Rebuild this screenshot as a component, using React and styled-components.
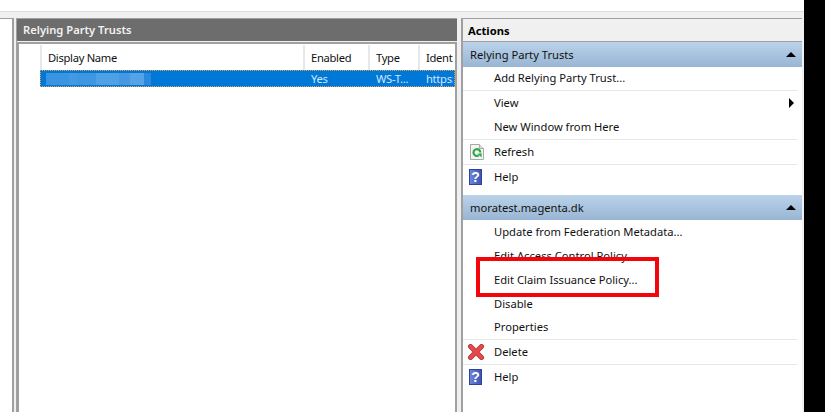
import React from 'react'
import styled, { createGlobalStyle } from 'styled-components'

const GlobalStyle = createGlobalStyle`
    html, body {
        margin: 0;
        padding: 0;
        background: #000;
    }
    body {
        font-family: "Noto Sans", "Open Sans", sans-serif;
        font-size: 11.2px;
        color: #000;
        overflow: hidden;
    }
`

const Page = styled.div`
    display: flex;
    width: 825px;
    height: 412px;
    overflow: hidden;
`

const Window = styled.div`
    width: 804px;
    display: flex;
    flex-direction: column;
    background: #f0f0f0;
`

const TopStrip = styled.div`
    height: 11px;
    background: #fff;
    border-bottom: 1px solid #dcdcdc;
`

const Panes = styled.div`
    flex: 1;
    display: flex;
    margin-top: 6px;
    min-height: 0;
`

const TreePane = styled.div`
    width: 12px;
    background: #fff;
    border-top: 1px solid #a0a0a0;
    border-right: 2px solid #a0a0a0;
    margin-right: 2px;
`

const CenterPane = styled.section`
    width: 440px;
    display: flex;
    flex-direction: column;
    border-top: 1px solid #a0a0a0;
    border-left: 1px solid #a0a0a0;
    margin-right: 4px;
`

const CenterTitle = styled.h2`
    margin: 0;
    height: 22px;
    line-height: 21px;
    padding-left: 6px;
    background: #6d6d6d;
    color: #f2f2f2;
    font-size: 11.2px;
    font-weight: 600;
`

const TableFrame = styled.div`
    flex: 1;
    margin-top: 1px;
    background: #fff;
    border-top: 2px solid #a0a0a0;
    border-left: 2px solid #a0a0a0;
    border-right: 2px solid #a0a0a0;
    padding-top: 1px;
    overflow: hidden;
`

const TableRow = styled.div`
    display: grid;
    grid-template-columns: 263px 65px 50px 35px;
    margin-left: 21px;
    letter-spacing: -0.3px;
    height: ${props => props.$height}px;
    line-height: ${props => props.$height + 1}px;
`

const HeadCell = styled.div`
    padding-left: 6px;
    border-left: 2px solid #e8e8e8;
    overflow: hidden;
    white-space: nowrap;
    color: #111;
`

const SelectedRow = styled(TableRow)`
    background: #0078d7;
    color: #d3e6f7;
    outline: 1px dotted #e0a050;
    outline-offset: -1px;
`

const RowCell = styled.div`
    padding-left: 8px;
    overflow: hidden;
    white-space: nowrap;
`

const BlurredName = styled.div`
    margin: 3px 0 2px 6px;
    width: 105px;
    height: 12px;
    background: linear-gradient(90deg,
        #3a94e2 0 22%, #4599e3 22% 30%, #3f97e2 30% 48%, #4fa0e4 48% 70%, #4599e3 70% 80%, #55a3e6 80% 93%, #2a89dd 93% 100%);
`

const ActionsPane = styled.aside`
    width: 339px;
    display: flex;
    flex-direction: column;
    background: #fff;
    border-top: 1px solid #a0a0a0;
    border-left: 2px solid #a0a0a0;
`

const ActionsTitle = styled.h2`
    margin: 0;
    height: 22px;
    line-height: 23px;
    padding-left: 5px;
    background: #f0f0f0;
    border-bottom: 1px solid #a0a0a0;
    font-size: 11.2px;
    font-weight: 700;
`

const ActionGroup = styled.div`
    position: relative;
    margin-bottom: 5px;
`

const GroupHead = styled.div`
    height: 25px;
    line-height: 24px;
    padding: 0 6px 0 7px;
    display: flex;
    justify-content: space-between;
    align-items: center;
    background: linear-gradient(#bbd3ea, #98b5d3);
    color: #111;
`

const UpArrow = styled.span`
    width: 0;
    height: 0;
    border-left: 5px solid transparent;
    border-right: 5px solid transparent;
    border-bottom: 5px solid #000;
`

const RightArrow = styled.span`
    width: 0;
    height: 0;
    margin: 1px 3px 0 0;
    border-top: 5px solid transparent;
    border-bottom: 5px solid transparent;
    border-left: 5px solid #000;
`

const Item = styled.div`
    display: flex;
    align-items: center;
    justify-content: space-between;
    height: ${props => props.$tall ? 25 : 24}px;
    box-sizing: border-box;
    margin-right: 5px;
    padding: 0 0 2px 31px;
    position: relative;
    color: #111;
    white-space: nowrap;
    border-bottom: ${props => props.$line ? '1px solid #e6e6e6' : 'none'};
`

const ItemIcon = styled.span`
    position: absolute;
    left: ${props => props.$left}px;
    top: 4px;
    height: 16px;
    display: block;

    svg {
        display: block;
    }
`

const Highlight = styled.div`
    position: absolute;
    left: 13px;
    top: 62px;
    width: 175px;
    height: 32px;
    border: 4px solid #f2060c;
`

const Edge = styled.div`
    flex: 1;
    background: #000;
`

const RefreshIcon = () => (
    <svg width="14" height="16" viewBox="0 0 14 16">
        <path d="M.5 .5H9.5L13.5 4.5V15.5H.5Z" fill="#f4f4f4" stroke="#a8a8a8" />
        <path d="M9.5 .5V4.5H13.5" fill="#e0e0e0" stroke="#a8a8a8" />
        <path d="M10.3 8.5A3.4 3.4 0 1 0 8.8 11.4" fill="none" stroke="#2fa84a" strokeWidth="2.2" />
        <path d="M7.5 9.8L11.6 13.6V9.2Z" fill="#2fa84a" />
    </svg>
)

const HelpIcon = () => (
    <svg width="13" height="16" viewBox="0 0 13 16">
        <defs>
            <linearGradient id="helpFill" x1="0" y1="0" x2="1" y2="0">
                <stop offset="0" stopColor="#6f86dc" />
                <stop offset="1" stopColor="#3f55b4" />
            </linearGradient>
        </defs>
        <rect width="13" height="16" fill="#2f4198" />
        <rect x="1" y="1" width="11" height="14" fill="url(#helpFill)" />
        <text x="6.5" y="13" textAnchor="middle" fontSize="14" fontWeight="700" fontFamily="Liberation Sans, sans-serif" fill="#fff">?</text>
    </svg>
)

const DeleteIcon = () => (
    <svg width="16" height="16" viewBox="0 0 16 16">
        <path d="M2.5 2.5L13.5 13.5M13.5 2.5L2.5 13.5" stroke="#b03a3a" strokeWidth="5" strokeLinecap="round" />
        <path d="M2.5 2.5L13.5 13.5M13.5 2.5L2.5 13.5" stroke="#e8484a" strokeWidth="3.4" strokeLinecap="round" />
    </svg>
)

const App = () => {
    return (
        <Page>
            <GlobalStyle />
            <Window>
                <TopStrip />
                <Panes>
                    <TreePane />
                    <CenterPane>
                        <CenterTitle>Relying Party Trusts</CenterTitle>
                        <TableFrame>
                            <TableRow $height={25}>
                                <HeadCell>Display Name</HeadCell>
                                <HeadCell>Enabled</HeadCell>
                                <HeadCell>Type</HeadCell>
                                <HeadCell>Identif</HeadCell>
                            </TableRow>
                            <SelectedRow $height={17}>
                                <BlurredName />
                                <RowCell>Yes</RowCell>
                                <RowCell>WS-T...</RowCell>
                                <RowCell>https:.</RowCell>
                            </SelectedRow>
                        </TableFrame>
                    </CenterPane>
                    <ActionsPane>
                        <ActionsTitle>Actions</ActionsTitle>
                        <ActionGroup>
                            <GroupHead>Relying Party Trusts<UpArrow /></GroupHead>
                            <Item $line>Add Relying Party Trust...</Item>
                            <Item>View<RightArrow /></Item>
                            <Item $tall $line>New Window from Here</Item>
                            <Item $tall $line><ItemIcon $left={7}><RefreshIcon /></ItemIcon>Refresh</Item>
                            <Item $tall><ItemIcon $left={6}><HelpIcon /></ItemIcon>Help</Item>
                        </ActionGroup>
                        <ActionGroup>
                            <GroupHead>moratest.magenta.dk<UpArrow /></GroupHead>
                            <Item>Update from Federation Metadata...</Item>
                            <Item>Edit Access Control Policy...</Item>
                            <Item>Edit Claim Issuance Policy...</Item>
                            <Item>Disable</Item>
                            <Item $line>Properties</Item>
                            <Item $tall $line><ItemIcon $left={5}><DeleteIcon /></ItemIcon>Delete</Item>
                            <Item $tall><ItemIcon $left={6}><HelpIcon /></ItemIcon>Help</Item>
                            <Highlight />
                        </ActionGroup>
                    </ActionsPane>
                </Panes>
            </Window>
            <Edge />
        </Page>
    )
}

export default App
